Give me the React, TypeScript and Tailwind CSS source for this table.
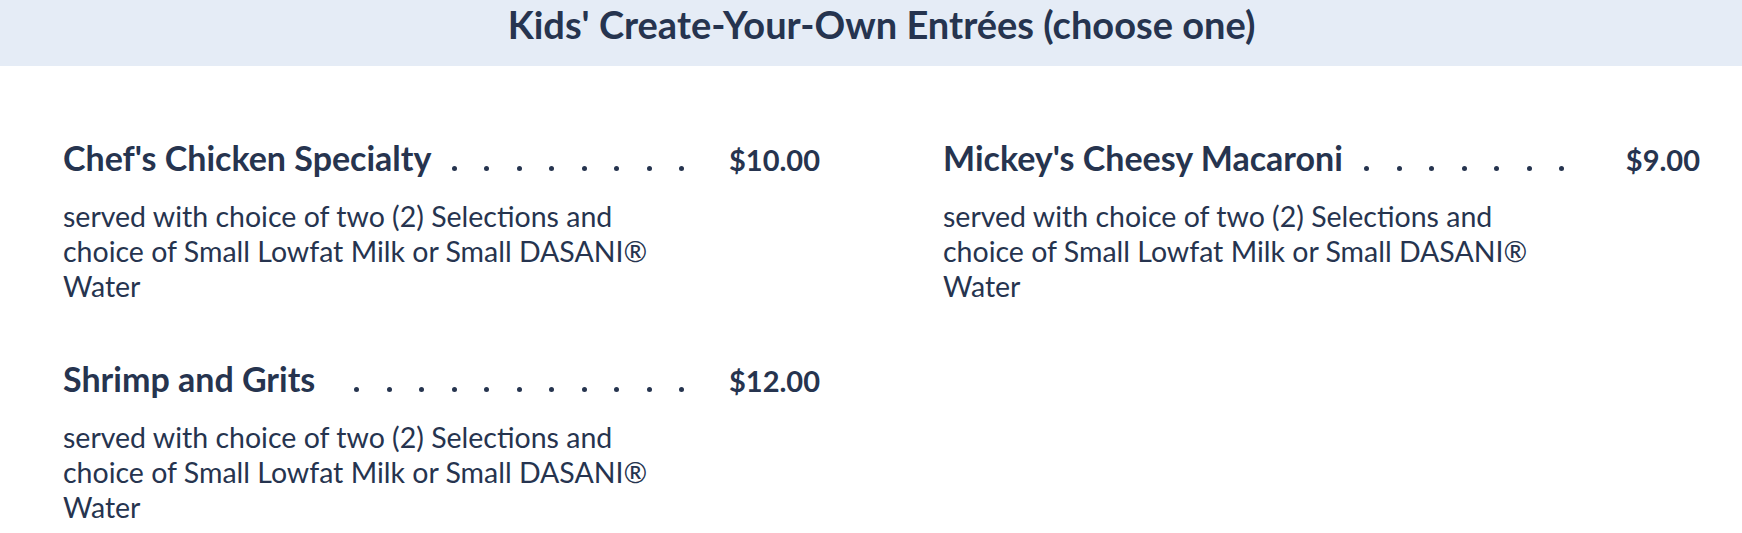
const items = [
  { name: "Chef's Chicken Specialty", price: '$10.00' },
  { name: "Mickey's Cheesy Macaroni", price: '$9.00' },
  { name: 'Shrimp and Grits', price: '$12.00' },
];

const description =
  'served with choice of two (2) Selections and choice of Small Lowfat Milk or Small DASANI® Water';

// whole dots only: the ones that don't fit wrap onto a hidden second line
function Leader() {
  return (
    <div className="flex h-[5px] min-w-0 flex-1 flex-wrap justify-end overflow-hidden">
      {Array.from({ length: 30 }).map((_, i) => (
        <span key={i} className="flex w-[32.5px] shrink-0 justify-center">
          <span className="h-[5px] w-[5px] rounded-full bg-current" />
        </span>
      ))}
    </div>
  );
}

function MenuItem({ name, price }: { name: string; price: string }) {
  return (
    <div>
      <div className="flex items-baseline text-[34px] leading-[40px] font-bold">
        <span className="shrink-0 pr-[4px]">{name}</span>
        <Leader />
        <span className="w-[122px] shrink-0 text-right text-[29px]">{price}</span>
      </div>
      <p className="mt-[19px] w-4/5 text-[28.5px] leading-[35px]">{description}</p>
    </div>
  );
}

export default function App() {
  return (
    <div className="min-h-screen bg-white font-['Lato','Liberation_Sans',sans-serif] text-[#26344f]">
      <div className="h-[66px] bg-[#e5ecf6] pt-[1px] pr-[42px] pl-[63px] text-center">
        <h2 className="text-[38px] leading-[46px] font-bold">Kids' Create-Your-Own Entrées (choose one)</h2>
      </div>
      <div className="grid grid-cols-2 gap-x-[123px] gap-y-[55px] pt-[72px] pr-[42px] pl-[63px]">
        {items.map((item) => (
          <MenuItem key={item.name} name={item.name} price={item.price} />
        ))}
      </div>
    </div>
  );
}
